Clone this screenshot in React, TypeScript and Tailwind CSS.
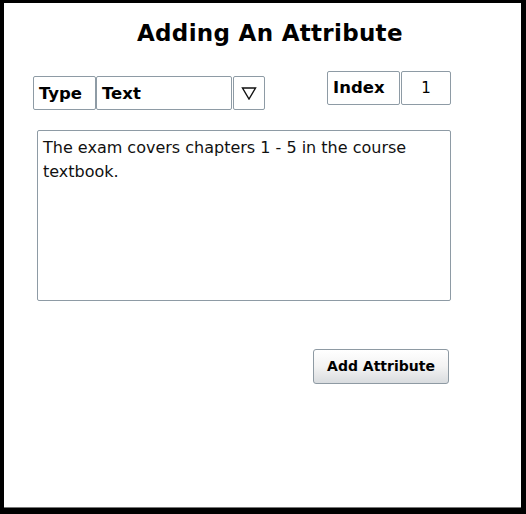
import React from 'react';

// Field box shared by the label cells and the input cells
const cell = 'flex items-center h-[34px] border border-[#8e9ba5] rounded-[2px] bg-white';

export default function App() {
  return (
    <div
      className="w-[526px] h-[514px] bg-black pl-[4px] pt-[3px] pr-[5px] pb-[6px] text-black"
      style={{ fontFamily: '"DejaVu Sans", Verdana, sans-serif' }}
    >
      <div className="w-full h-full bg-white flex flex-col border-b border-[#777]">
        {/* ── Title ─────────────────────────────────────── */}
        <h1 className="mt-[15px] ml-[133px] text-[23px] font-bold leading-[30px] tracking-[0.3px]">
          Adding An Attribute
        </h1>

        {/* ── Type / Index row ──────────────────────────── */}
        <div className="flex items-start mt-[23px] ml-[29px]">
          <div className="flex mt-[5px]">
            <div className={`${cell} w-[63px] pl-[5px] pt-[2px] text-[16.5px] font-bold`}>Type</div>
            <div className={`${cell} w-[136px] pl-[5px] pt-[2px] text-[16.5px] font-bold`}>Text</div>
            <div className={`${cell} w-[32px] ml-[1px] justify-center`}>
              <svg width="16" height="14" viewBox="0 0 16 14">
                <path d="M1.5 2 H14.5 L8 13 Z" fill="none" stroke="#111" strokeWidth="1.4" strokeLinejoin="miter" />
              </svg>
            </div>
          </div>

          <div className="flex gap-[1px] ml-[62px]">
            <div className={`${cell} w-[73px] pl-[5px] text-[16.5px] font-bold`}>Index</div>
            <div className={`${cell} w-[50px] justify-center text-[15px]`}>1</div>
          </div>
        </div>

        {/* ── Value textarea ────────────────────────────── */}
        <div className="ml-[33px] mt-[20px] w-[414px] h-[171px] border border-[#8e9ba5] rounded-[2px] px-[5px] pt-[5px] text-[16px] leading-[24px] text-[#111]">
          The exam covers chapters 1 - 5 in the course textbook.
        </div>

        {/* ── Submit ────────────────────────────────────── */}
        <div className="flex justify-end mt-[48px] w-[445px]">
          <button className="w-[136px] h-[35px] rounded-[3px] border border-[#8e9aa3] bg-gradient-to-b from-white via-[#f3f3f3] to-[#d9dcdf] text-[14px] font-bold">
            Add Attribute
          </button>
        </div>
      </div>
    </div>
  );
}
